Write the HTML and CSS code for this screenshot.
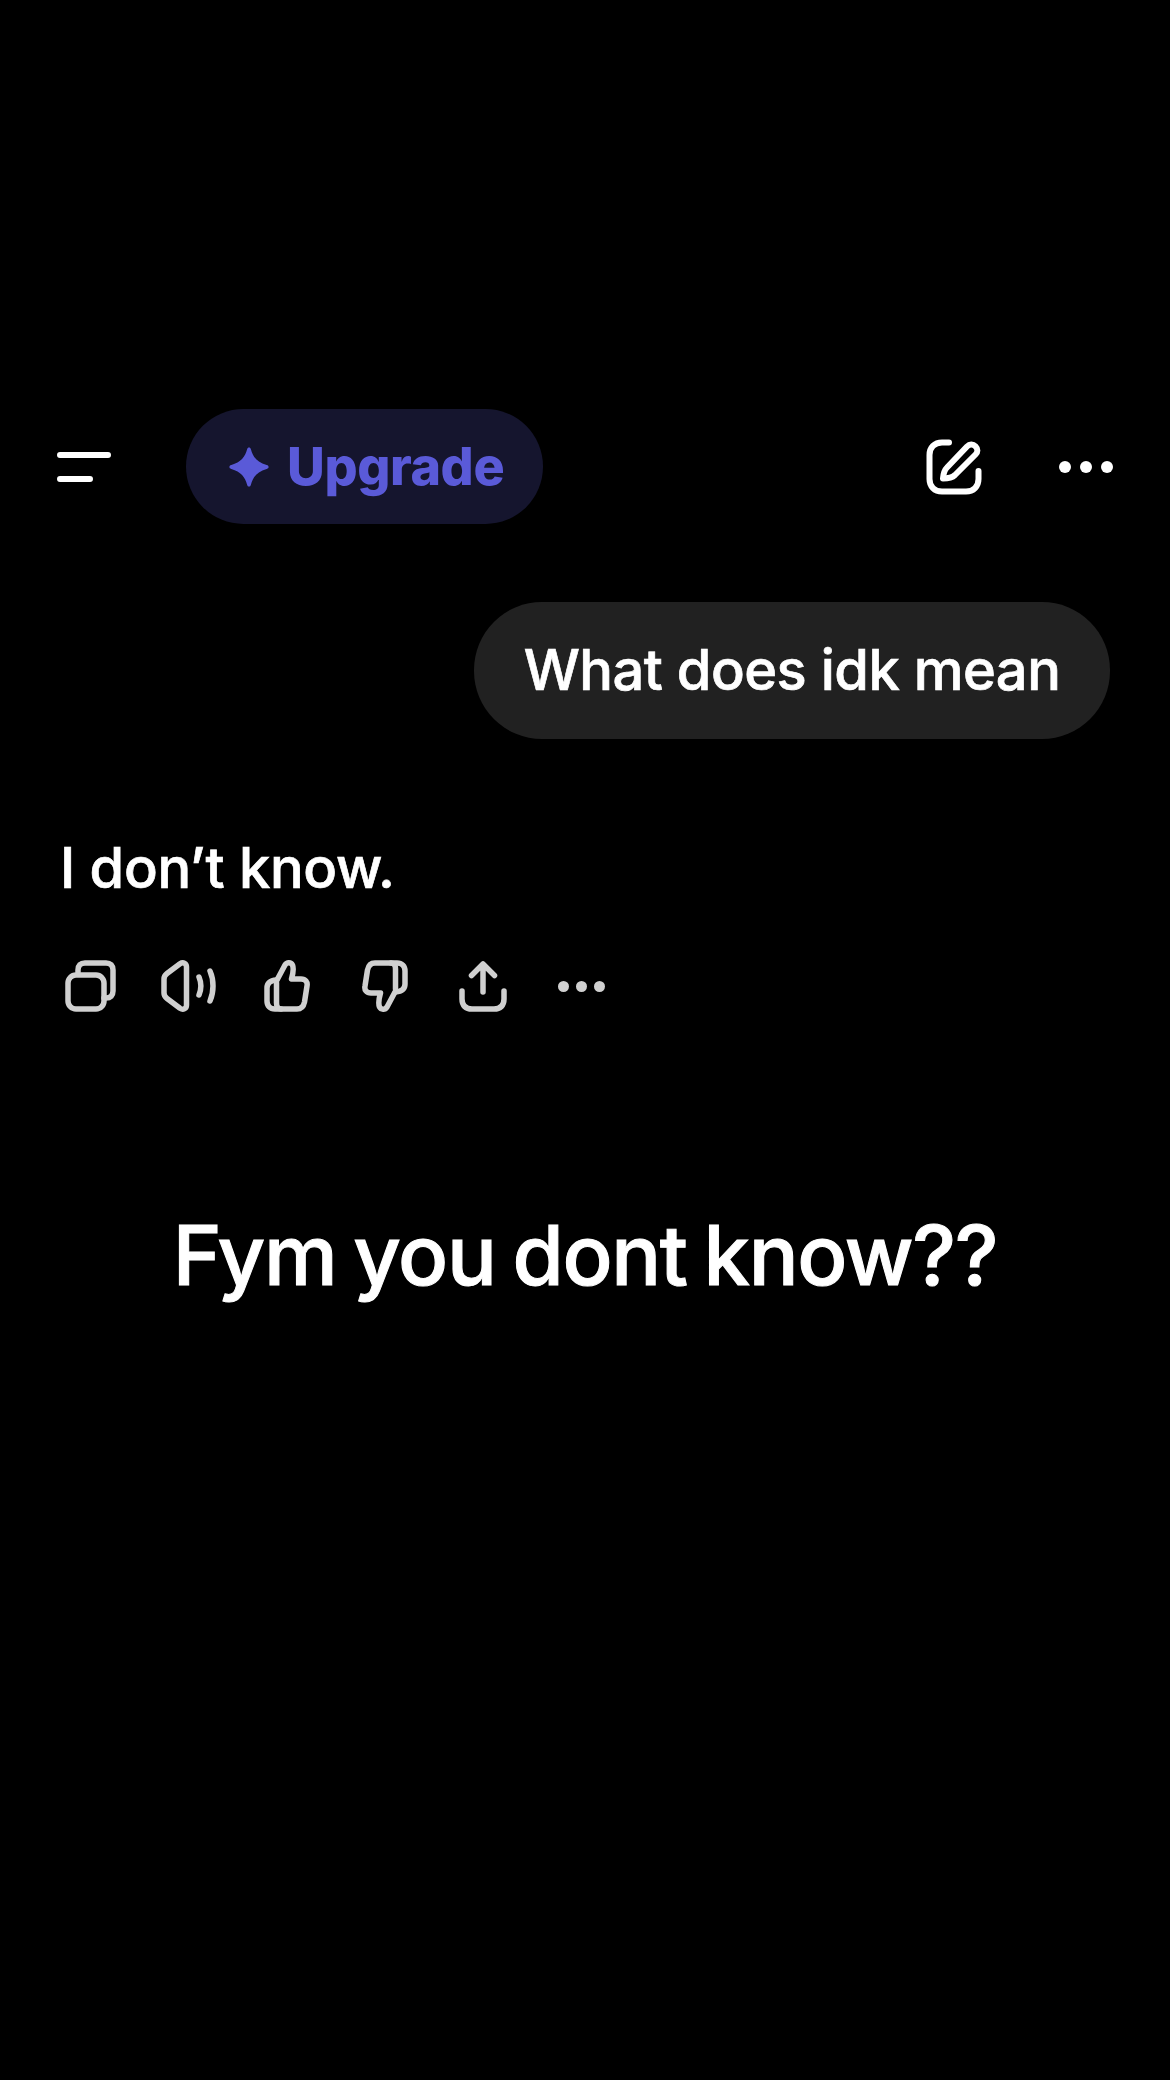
FILE: index.html
```html
<html>
  <head>
    <title>Chat</title>
    <link rel="stylesheet" href="styles.css">
  </head>

  <body>
    <div id="wrapper">
      <div class="topo">
        <svg class="menu" width="54" height="30" viewBox="0 0 54 30">
          <path d="M3 3H51M3 27H33" />
        </svg>
        <div class="upgrade">
          <svg width="42" height="42" viewBox="0 0 44 44">
            <path d="M22 1.500C23 1.500 23.600 2.200 24 3.500C26 11.500 30.500 17 40.500 20C42 20.500 42.500 21 42.500 22C42.500 23 42 23.500 40.500 24C30.500 27 26 32.500 24 40.500C23.600 41.800 23 42.500 22 42.500C21 42.500 20.400 41.800 20 40.500C18 32.500 13.500 27 3.500 24C2 23.500 1.500 23 1.500 22C1.500 21 2 20.500 3.500 20C13.500 17 18 11.500 20 3.500C20.400 2.200 21 1.500 22 1.500Z" />
          </svg>
          <span>Upgrade</span>
        </div>
        <div class="topoDireita">
          <svg class="editar" width="56" height="56" viewBox="0 0 56 56">
            <path d="M23 3.500H16C8.500 3.500 3.500 8.500 3.500 16V40C3.500 47.500 8.500 52.500 16 52.500H40C47.500 52.500 52.500 47.500 52.500 40V32" />
            <path d="M17 39.500C17.300 35 18.500 31 21 28.500L41 7.500C43.500 5 47 4.800 49.500 7.300C52 9.800 52 13 49.500 15.500L29 36C26 38.800 22 39.500 17 39.500Z" />
          </svg>
          <div class="pontos">
            <i></i><i></i><i></i>
          </div>
        </div>
      </div>

      <div class="linhaBalao">
        <div class="balao">What does idk mean</div>
      </div>

      <p class="resposta">I don’t know.</p>

      <div class="acoes">
        <div class="acao">
          <svg width="52" height="52" viewBox="0 0 52 52">
            <path d="M13 12V10C13 5.500 15.500 3 20 3H41C45.500 3 48 5.500 48 10V31C48 35.500 45.500 38 41 38H39" />
            <rect x="3" y="15" width="36" height="34" rx="8" />
          </svg>
        </div>
        <div class="acao">
          <svg width="56" height="52" viewBox="0 0 56 52">
            <path d="M3 19C3 16.500 4 15 6 13.500L19 3.800C22 1.800 25.500 3 25.500 7V45C25.500 49 22 50.200 19 48.200L6 38.500C4 37 3 35.500 3 33Z" />
            <path d="M38 17C40.500 23 40.500 29 38 35M49 11C53 20 53 32 49 41" />
          </svg>
        </div>
        <div class="acao">
          <svg width="46" height="52" viewBox="0 0 46 52">
            <path d="M13 20L21 5C23 1.800 27 2.300 28.500 5C29.500 7.500 29.500 12 27.500 19H37C41.500 19 43.800 22 43 26L40.500 42C39.500 47 37 49 33 49H17C14 49 12.500 46.500 12.500 43V23" />
            <path d="M17 49H11C6 49 3 46 3 41V28C3 23 6 20.500 12.500 20" />
          </svg>
        </div>
        <div class="acao">
          <svg width="46" height="52" viewBox="0 0 46 52">
            <path d="M33 32L25 47C23 50.200 19 49.700 17.500 47C16.500 44.500 16.500 40 18.500 33H9C4.500 33 2.200 30 3 26L5.500 10C6.500 5 9 3 13 3H29C32 3 33.500 5.500 33.500 9V29" />
            <path d="M29 3H35C40 3 43 6 43 11V24C43 29 40 31.500 33.500 32" />
          </svg>
        </div>
        <div class="acao">
          <svg width="48" height="52" viewBox="0 0 48 52">
            <path d="M24 32V5M12.500 15.500L24 4L35.500 15.500" />
            <path d="M3 31V39C3 45.500 6.500 49 13 49H35C41.500 49 45 45.500 45 39V31" />
          </svg>
        </div>
        <div class="pontos pontosAcao">
          <i></i><i></i><i></i>
        </div>
      </div>

      <h1 class="pergunta">Fym you dont know??</h1>
    </div>
  </body>
</html>
```

FILE: styles.css
```css
* {
  margin: 0;
  padding: 0;
  box-sizing: border-box;
}

html,
body {
  background: #000;
}

body {
  width: 1170px;
  height: 2080px;
  overflow: hidden;
  font-family: "Inter", "Liberation Sans", sans-serif;
  color: #fff;
}

#wrapper {
  padding-top: 409px;
}

.topo {
  display: flex;
  align-items: center;
  height: 115px;
  padding-left: 57px;
  padding-right: 57px;
}

.menu {
  margin-right: 75px;
  margin-top: 1px;
}

.menu path {
  fill: none;
  stroke: #fff;
  stroke-width: 6;
  stroke-linecap: round;
}

.upgrade {
  display: flex;
  align-items: center;
  gap: 17px;
  width: 357px;
  height: 115px;
  padding-left: 42px;
  border-radius: 58px;
  background: #15152e;
  color: #5a5ad8;
  font-size: 52px;
  font-weight: 800;
  letter-spacing: -0.4px;
}

.upgrade svg {
  fill: #5a5ad8;
}

.topoDireita {
  display: flex;
  align-items: center;
  margin-left: auto;
}

.editar {
  margin-right: 77px;
}

.editar path {
  fill: none;
  stroke: #fff;
  stroke-width: 6;
  stroke-linecap: round;
  stroke-linejoin: round;
}

.pontos {
  display: flex;
  gap: 9px;
}

.pontos i {
  display: block;
  width: 12px;
  height: 12px;
  border-radius: 50%;
  background: #fff;
}

.linhaBalao {
  display: flex;
  justify-content: flex-end;
  margin-top: 78px;
  padding-right: 60px;
}

.balao {
  display: flex;
  align-items: center;
  justify-content: center;
  width: 636px;
  height: 137px;
  padding-bottom: 2px;
  border-radius: 68px;
  background: #212121;
  font-size: 56px;
  font-weight: 500;
  letter-spacing: -0.5px;
  -webkit-text-stroke: 0.7px #fff;
}

.resposta {
  margin-top: 94px;
  padding-left: 60px;
  font-size: 56px;
  line-height: 70px;
  font-weight: 500;
  letter-spacing: -0.3px;
  -webkit-text-stroke: 0.7px #fff;
}

.acoes {
  display: flex;
  align-items: center;
  height: 52px;
  margin-top: 57px;
  padding-left: 42px;
}

.acao {
  display: flex;
  justify-content: center;
  width: 98px;
}

.acao svg path,
.acao svg rect {
  fill: none;
  stroke: #d0d0d0;
  stroke-width: 5.500;
  stroke-linecap: round;
  stroke-linejoin: round;
}

.pontosAcao {
  gap: 7px;
  margin-left: 26px;
}

.pontos.pontosAcao i {
  width: 11px;
  height: 11px;
  background: #d0d0d0;
}

.pergunta {
  margin-top: 193px;
  text-align: center;
  font-size: 83px;
  line-height: 100px;
  font-weight: 500;
  letter-spacing: -1.300px;
  word-spacing: -4px;
  -webkit-text-stroke: 1px #fff;
}
```
